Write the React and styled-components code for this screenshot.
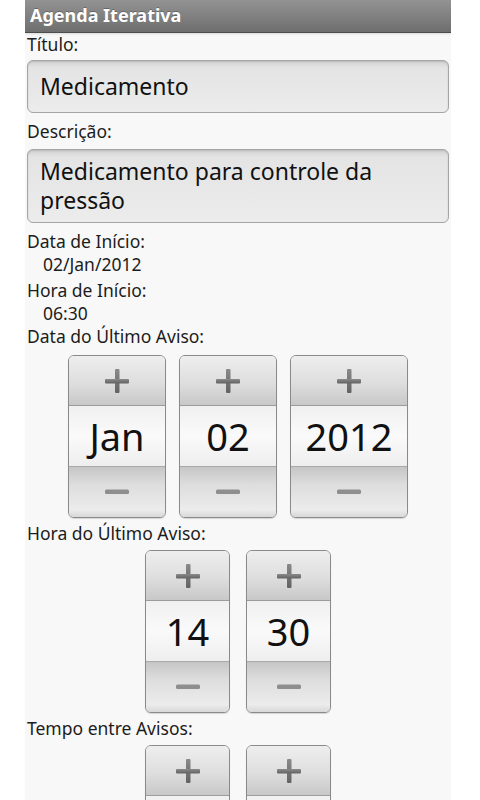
import React from 'react';
import styled, { createGlobalStyle } from 'styled-components';

const GlobalStyle = createGlobalStyle`
  html, body {
    margin: 0;
    padding: 0;
    background: #ffffff;
  }
  body {
    font-family: "Noto Sans", "Open Sans", "DejaVu Sans", sans-serif;
  }
`;

// Phone screen
const Screen = styled.div`
  width: 426px;
  height: 800px;
  margin-left: 25px;
  background: #f8f8f8;
  overflow: hidden;
`;

const TitleBar = styled.div`
  height: 33px;
  box-sizing: border-box;
  padding-left: 5px;
  background: linear-gradient(#939393, #6e6e6e);
  border-bottom: 1px solid #4d4d4d;
  box-shadow: 0 1px 2px rgba(0, 0, 0, 0.12);
  color: #ffffff;
  font-weight: bold;
  font-size: 18px;
  line-height: 30px;
  text-shadow: 0 -1px 0 rgba(0, 0, 0, 0.25);
`;

const Form = styled.div`
  padding: 0 2px;
`;

const Label = styled.div`
  font-size: 17.5px;
  line-height: 23px;
  color: #1c1c1c;
  margin-top: ${(p) => p.$top || 0}px;
`;

const Value = styled(Label)`
  padding-left: 16px;
`;

const TextBox = styled.div`
  box-sizing: border-box;
  min-height: 53px;
  margin: ${(p) => p.$top || 4}px 0 7px;
  padding: 7px 13px 7px 12px;
  display: flex;
  align-items: center;
  border: 1px solid #a5a5a5;
  border-radius: 6px;
  background: linear-gradient(#d2d2d2 0, #e4e4e4 7px, #ececec 100%);
  box-shadow: inset 0 1px 2px rgba(0, 0, 0, 0.12);
  font-size: 23px;
  line-height: 29px;
  color: #111111;
`;

// Number picker (Android style)
const PickerRow = styled.div`
  display: flex;
  justify-content: center;
  gap: ${(p) => p.$gap}px;
  margin: ${(p) => p.$top || 5}px 0 4px;
`;

const Picker = styled.div`
  width: ${(p) => p.$w}px;
  box-sizing: border-box;
  display: flex;
  flex-direction: column;
  border: 1px solid #8a8a8a;
  border-radius: 6px;
  overflow: hidden;
  box-shadow: 0 1px 1px rgba(0, 0, 0, 0.15);
`;

const StepButton = styled.div`
  height: ${(p) => (p.$up ? 49 : 50)}px;
  display: flex;
  align-items: center;
  justify-content: center;
  background: ${(p) =>
    p.$up
      ? 'linear-gradient(#eeeeee, #dedede 55%, #c8c8c8)'
      : 'linear-gradient(#c6c6c6, #dddddd 35%, #ececec 85%, #d8d8d8)'};
`;

const ValueCell = styled.div`
  height: 60px;
  display: flex;
  align-items: center;
  justify-content: center;
  border-top: 1px solid #9c9c9c;
  border-bottom: 1px solid #a9a9a9;
  background: linear-gradient(#f0f0f0, #fafafa 50%, #eeeeee);
  font-size: 38px;
  color: #111111;
`;

const PlusIcon = () => (
  <svg width="26" height="26" viewBox="0 0 26 26">
    <defs>
      <linearGradient id="pg" x1="0" y1="0" x2="0" y2="1">
        <stop offset="0" stopColor="#8a8a8a" />
        <stop offset="1" stopColor="#626262" />
      </linearGradient>
    </defs>
    <rect x="11" y="1" width="4.5" height="24" rx="1" fill="url(#pg)" />
    <rect x="1" y="11" width="24" height="4.5" rx="1" fill="url(#pg)" />
  </svg>
);

const MinusIcon = () => (
  <svg width="26" height="6" viewBox="0 0 26 6">
    <rect x="1" y="0.5" width="24" height="4.5" rx="1.5" fill="#8e8e8e" />
  </svg>
);

const NumberPicker = ({ value, width }) => (
  <Picker $w={width}>
    <StepButton $up>
      <PlusIcon />
    </StepButton>
    <ValueCell>{value}</ValueCell>
    <StepButton>
      <MinusIcon />
    </StepButton>
  </Picker>
);

export default function App() {
  return (
    <>
      <GlobalStyle />
      <Screen>
        <TitleBar>Agenda Iterativa</TitleBar>
        <Form>
          <Label>Título:</Label>
          <TextBox>Medicamento</TextBox>
          <Label>Descrição:</Label>
          <TextBox $top={6}>Medicamento para controle da pressão</TextBox>

          <Label $top={3}>Data de Início:</Label>
          <Value>02/Jan/2012</Value>
          <Label $top={3}>Hora de Início:</Label>
          <Value>06:30</Value>

          <Label>Data do Último Aviso:</Label>
          <PickerRow $gap={13} $top={7}>
            <NumberPicker value="Jan" width={98} />
            <NumberPicker value="02" width={98} />
            <NumberPicker value="2012" width={118} />
          </PickerRow>

          <Label>Hora do Último Aviso:</Label>
          <PickerRow $gap={16}>
            <NumberPicker value="14" width={85} />
            <NumberPicker value="30" width={85} />
          </PickerRow>

          <Label>Tempo entre Avisos:</Label>
          <PickerRow $gap={16}>
            <NumberPicker value="" width={85} />
            <NumberPicker value="" width={85} />
          </PickerRow>
        </Form>
      </Screen>
    </>
  );
}
